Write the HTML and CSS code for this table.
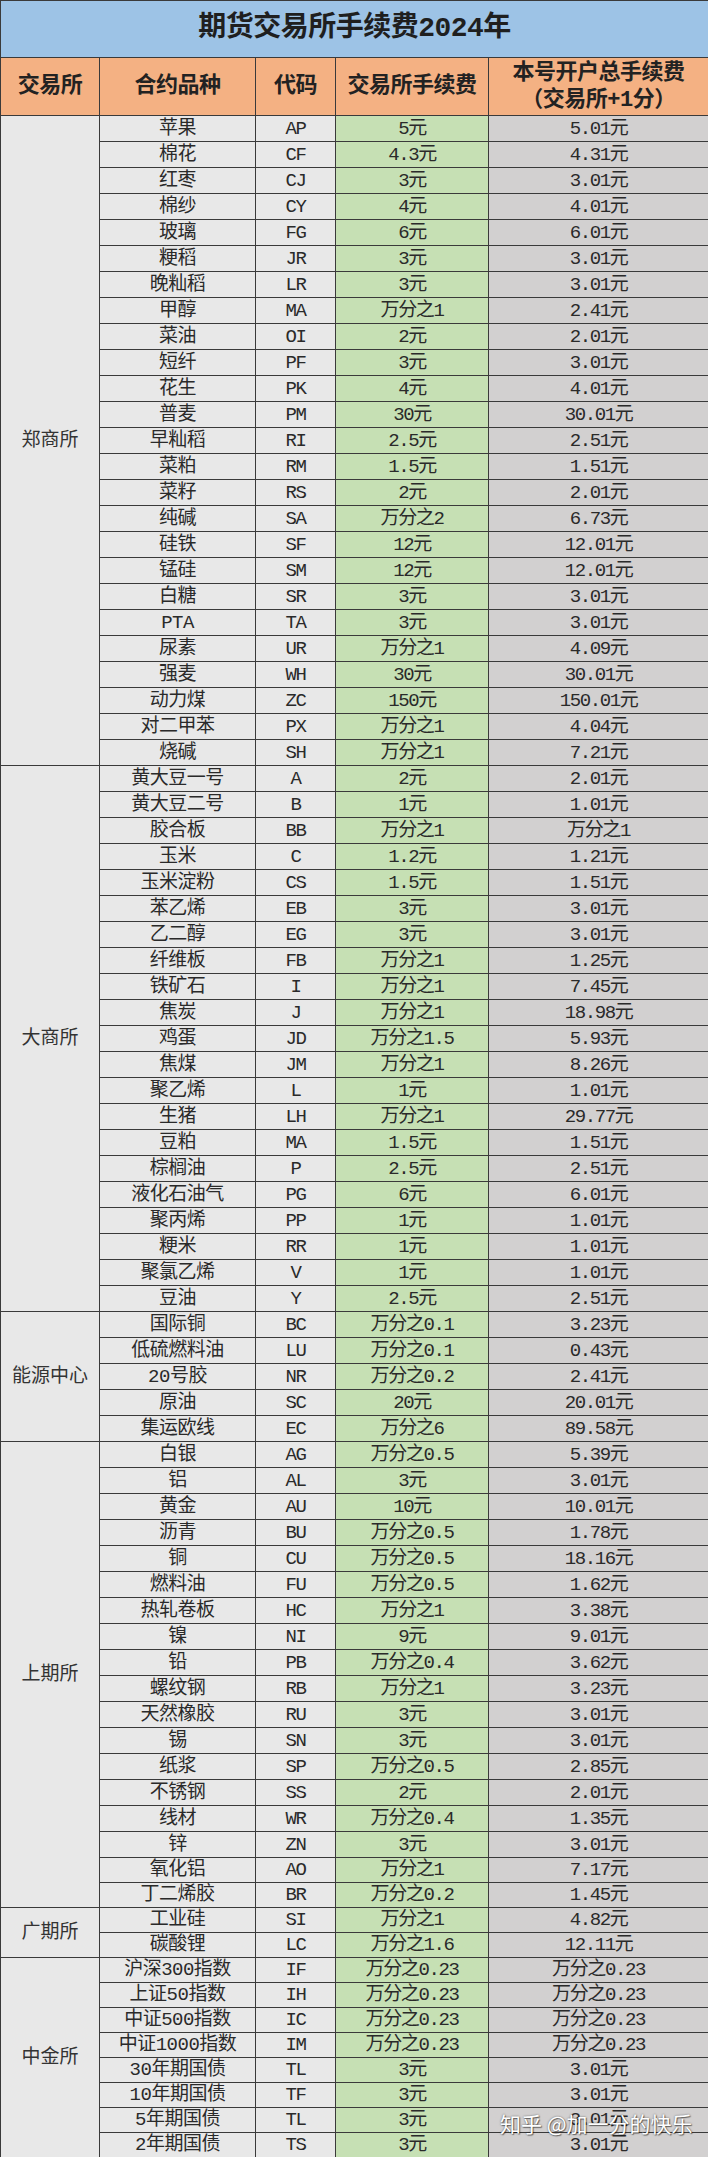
FILE: index.html
```html
<!DOCTYPE html>
<html lang="zh-CN">
<head>
<meta charset="utf-8">
<title>期货交易所手续费2024年</title>
<link rel="stylesheet" href="styles.css">
</head>
<body>
<div class="sheet">
<table class="fees">
  <colgroup>
    <col class="c-ex"><col class="c-name"><col class="c-code"><col class="c-fee"><col class="c-total">
  </colgroup>
  <thead>
    <tr class="title-row"><th colspan="5" class="title">期货交易所手续费2024年</th></tr>
    <tr class="head-row">
      <th>交易所</th><th>合约品种</th><th>代码</th><th>交易所手续费</th>
      <th class="two">本号开户总手续费<br>（交易所+1分）</th>
    </tr>
  </thead>
  <tbody>
    <tr><td class="ex" rowspan="25">郑商所</td><td class="nm">苹果</td><td class="cd">AP</td><td class="fe">5元</td><td class="tt">5.01元</td></tr>
    <tr><td class="nm">棉花</td><td class="cd">CF</td><td class="fe">4.3元</td><td class="tt">4.31元</td></tr>
    <tr><td class="nm">红枣</td><td class="cd">CJ</td><td class="fe">3元</td><td class="tt">3.01元</td></tr>
    <tr><td class="nm">棉纱</td><td class="cd">CY</td><td class="fe">4元</td><td class="tt">4.01元</td></tr>
    <tr><td class="nm">玻璃</td><td class="cd">FG</td><td class="fe">6元</td><td class="tt">6.01元</td></tr>
    <tr><td class="nm">粳稻</td><td class="cd">JR</td><td class="fe">3元</td><td class="tt">3.01元</td></tr>
    <tr><td class="nm">晚籼稻</td><td class="cd">LR</td><td class="fe">3元</td><td class="tt">3.01元</td></tr>
    <tr><td class="nm">甲醇</td><td class="cd">MA</td><td class="fe">万分之1</td><td class="tt">2.41元</td></tr>
    <tr><td class="nm">菜油</td><td class="cd">OI</td><td class="fe">2元</td><td class="tt">2.01元</td></tr>
    <tr><td class="nm">短纤</td><td class="cd">PF</td><td class="fe">3元</td><td class="tt">3.01元</td></tr>
    <tr><td class="nm">花生</td><td class="cd">PK</td><td class="fe">4元</td><td class="tt">4.01元</td></tr>
    <tr><td class="nm">普麦</td><td class="cd">PM</td><td class="fe">30元</td><td class="tt">30.01元</td></tr>
    <tr><td class="nm">早籼稻</td><td class="cd">RI</td><td class="fe">2.5元</td><td class="tt">2.51元</td></tr>
    <tr><td class="nm">菜粕</td><td class="cd">RM</td><td class="fe">1.5元</td><td class="tt">1.51元</td></tr>
    <tr><td class="nm">菜籽</td><td class="cd">RS</td><td class="fe">2元</td><td class="tt">2.01元</td></tr>
    <tr><td class="nm">纯碱</td><td class="cd">SA</td><td class="fe">万分之2</td><td class="tt">6.73元</td></tr>
    <tr><td class="nm">硅铁</td><td class="cd">SF</td><td class="fe">12元</td><td class="tt">12.01元</td></tr>
    <tr><td class="nm">锰硅</td><td class="cd">SM</td><td class="fe">12元</td><td class="tt">12.01元</td></tr>
    <tr><td class="nm">白糖</td><td class="cd">SR</td><td class="fe">3元</td><td class="tt">3.01元</td></tr>
    <tr><td class="nm">PTA</td><td class="cd">TA</td><td class="fe">3元</td><td class="tt">3.01元</td></tr>
    <tr><td class="nm">尿素</td><td class="cd">UR</td><td class="fe">万分之1</td><td class="tt">4.09元</td></tr>
    <tr><td class="nm">强麦</td><td class="cd">WH</td><td class="fe">30元</td><td class="tt">30.01元</td></tr>
    <tr><td class="nm">动力煤</td><td class="cd">ZC</td><td class="fe">150元</td><td class="tt">150.01元</td></tr>
    <tr><td class="nm">对二甲苯</td><td class="cd">PX</td><td class="fe">万分之1</td><td class="tt">4.04元</td></tr>
    <tr><td class="nm">烧碱</td><td class="cd">SH</td><td class="fe">万分之1</td><td class="tt">7.21元</td></tr>

    <tr><td class="ex" rowspan="21">大商所</td><td class="nm">黄大豆一号</td><td class="cd">A</td><td class="fe">2元</td><td class="tt">2.01元</td></tr>
    <tr><td class="nm">黄大豆二号</td><td class="cd">B</td><td class="fe">1元</td><td class="tt">1.01元</td></tr>
    <tr><td class="nm">胶合板</td><td class="cd">BB</td><td class="fe">万分之1</td><td class="tt">万分之1</td></tr>
    <tr><td class="nm">玉米</td><td class="cd">C</td><td class="fe">1.2元</td><td class="tt">1.21元</td></tr>
    <tr><td class="nm">玉米淀粉</td><td class="cd">CS</td><td class="fe">1.5元</td><td class="tt">1.51元</td></tr>
    <tr><td class="nm">苯乙烯</td><td class="cd">EB</td><td class="fe">3元</td><td class="tt">3.01元</td></tr>
    <tr><td class="nm">乙二醇</td><td class="cd">EG</td><td class="fe">3元</td><td class="tt">3.01元</td></tr>
    <tr><td class="nm">纤维板</td><td class="cd">FB</td><td class="fe">万分之1</td><td class="tt">1.25元</td></tr>
    <tr><td class="nm">铁矿石</td><td class="cd">I</td><td class="fe">万分之1</td><td class="tt">7.45元</td></tr>
    <tr><td class="nm">焦炭</td><td class="cd">J</td><td class="fe">万分之1</td><td class="tt">18.98元</td></tr>
    <tr><td class="nm">鸡蛋</td><td class="cd">JD</td><td class="fe">万分之1.5</td><td class="tt">5.93元</td></tr>
    <tr><td class="nm">焦煤</td><td class="cd">JM</td><td class="fe">万分之1</td><td class="tt">8.26元</td></tr>
    <tr><td class="nm">聚乙烯</td><td class="cd">L</td><td class="fe">1元</td><td class="tt">1.01元</td></tr>
    <tr><td class="nm">生猪</td><td class="cd">LH</td><td class="fe">万分之1</td><td class="tt">29.77元</td></tr>
    <tr><td class="nm">豆粕</td><td class="cd">MA</td><td class="fe">1.5元</td><td class="tt">1.51元</td></tr>
    <tr><td class="nm">棕榈油</td><td class="cd">P</td><td class="fe">2.5元</td><td class="tt">2.51元</td></tr>
    <tr><td class="nm">液化石油气</td><td class="cd">PG</td><td class="fe">6元</td><td class="tt">6.01元</td></tr>
    <tr><td class="nm">聚丙烯</td><td class="cd">PP</td><td class="fe">1元</td><td class="tt">1.01元</td></tr>
    <tr><td class="nm">粳米</td><td class="cd">RR</td><td class="fe">1元</td><td class="tt">1.01元</td></tr>
    <tr><td class="nm">聚氯乙烯</td><td class="cd">V</td><td class="fe">1元</td><td class="tt">1.01元</td></tr>
    <tr><td class="nm">豆油</td><td class="cd">Y</td><td class="fe">2.5元</td><td class="tt">2.51元</td></tr>

    <tr><td class="ex" rowspan="5">能源中心</td><td class="nm">国际铜</td><td class="cd">BC</td><td class="fe">万分之0.1</td><td class="tt">3.23元</td></tr>
    <tr><td class="nm">低硫燃料油</td><td class="cd">LU</td><td class="fe">万分之0.1</td><td class="tt">0.43元</td></tr>
    <tr><td class="nm">20号胶</td><td class="cd">NR</td><td class="fe">万分之0.2</td><td class="tt">2.41元</td></tr>
    <tr><td class="nm">原油</td><td class="cd">SC</td><td class="fe">20元</td><td class="tt">20.01元</td></tr>
    <tr><td class="nm">集运欧线</td><td class="cd">EC</td><td class="fe">万分之6</td><td class="tt">89.58元</td></tr>

    <tr><td class="ex" rowspan="18">上期所</td><td class="nm">白银</td><td class="cd">AG</td><td class="fe">万分之0.5</td><td class="tt">5.39元</td></tr>
    <tr><td class="nm">铝</td><td class="cd">AL</td><td class="fe">3元</td><td class="tt">3.01元</td></tr>
    <tr><td class="nm">黄金</td><td class="cd">AU</td><td class="fe">10元</td><td class="tt">10.01元</td></tr>
    <tr><td class="nm">沥青</td><td class="cd">BU</td><td class="fe">万分之0.5</td><td class="tt">1.78元</td></tr>
    <tr><td class="nm">铜</td><td class="cd">CU</td><td class="fe">万分之0.5</td><td class="tt">18.16元</td></tr>
    <tr><td class="nm">燃料油</td><td class="cd">FU</td><td class="fe">万分之0.5</td><td class="tt">1.62元</td></tr>
    <tr><td class="nm">热轧卷板</td><td class="cd">HC</td><td class="fe">万分之1</td><td class="tt">3.38元</td></tr>
    <tr><td class="nm">镍</td><td class="cd">NI</td><td class="fe">9元</td><td class="tt">9.01元</td></tr>
    <tr><td class="nm">铅</td><td class="cd">PB</td><td class="fe">万分之0.4</td><td class="tt">3.62元</td></tr>
    <tr><td class="nm">螺纹钢</td><td class="cd">RB</td><td class="fe">万分之1</td><td class="tt">3.23元</td></tr>
    <tr><td class="nm">天然橡胶</td><td class="cd">RU</td><td class="fe">3元</td><td class="tt">3.01元</td></tr>
    <tr><td class="nm">锡</td><td class="cd">SN</td><td class="fe">3元</td><td class="tt">3.01元</td></tr>
    <tr><td class="nm">纸浆</td><td class="cd">SP</td><td class="fe">万分之0.5</td><td class="tt">2.85元</td></tr>
    <tr><td class="nm">不锈钢</td><td class="cd">SS</td><td class="fe">2元</td><td class="tt">2.01元</td></tr>
    <tr><td class="nm">线材</td><td class="cd">WR</td><td class="fe">万分之0.4</td><td class="tt">1.35元</td></tr>
    <tr><td class="nm">锌</td><td class="cd">ZN</td><td class="fe">3元</td><td class="tt">3.01元</td></tr>
    <tr class="short"><td class="nm">氧化铝</td><td class="cd">AO</td><td class="fe">万分之1</td><td class="tt">7.17元</td></tr>
    <tr class="short"><td class="nm">丁二烯胶</td><td class="cd">BR</td><td class="fe">万分之0.2</td><td class="tt">1.45元</td></tr>

    <tr class="short"><td class="ex" rowspan="2">广期所</td><td class="nm">工业硅</td><td class="cd">SI</td><td class="fe">万分之1</td><td class="tt">4.82元</td></tr>
    <tr class="short"><td class="nm">碳酸锂</td><td class="cd">LC</td><td class="fe">万分之1.6</td><td class="tt">12.11元</td></tr>

    <tr class="short"><td class="ex" rowspan="8">中金所</td><td class="nm">沪深300指数</td><td class="cd">IF</td><td class="fe">万分之0.23</td><td class="tt">万分之0.23</td></tr>
    <tr class="short"><td class="nm">上证50指数</td><td class="cd">IH</td><td class="fe">万分之0.23</td><td class="tt">万分之0.23</td></tr>
    <tr class="short"><td class="nm">中证500指数</td><td class="cd">IC</td><td class="fe">万分之0.23</td><td class="tt">万分之0.23</td></tr>
    <tr class="short"><td class="nm">中证1000指数</td><td class="cd">IM</td><td class="fe">万分之0.23</td><td class="tt">万分之0.23</td></tr>
    <tr class="short"><td class="nm">30年期国债</td><td class="cd">TL</td><td class="fe">3元</td><td class="tt">3.01元</td></tr>
    <tr class="short"><td class="nm">10年期国债</td><td class="cd">TF</td><td class="fe">3元</td><td class="tt">3.01元</td></tr>
    <tr class="short"><td class="nm">5年期国债</td><td class="cd">TL</td><td class="fe">3元</td><td class="tt">3.01元</td></tr>
    <tr class="short"><td class="nm">2年期国债</td><td class="cd">TS</td><td class="fe">3元</td><td class="tt">3.01元</td></tr>
  </tbody>
</table>
<div class="watermark">知乎 @加一分的快乐</div>
</div>
</body>
</html>
```

FILE: styles.css
```css
html, body {
  margin: 0;
  padding: 0;
  background: #ffffff;
}

.sheet {
  position: relative;
  width: 708px;
}

.fees {
  width: 708px;
  table-layout: fixed;
  border-collapse: collapse;
  font-family: "Liberation Mono", "Noto Sans CJK SC", monospace;
  color: #2a2a2a;
  font-size: 19px;
  line-height: 22px;
}

.c-ex { width: 99px; }
.c-name { width: 156px; }
.c-code { width: 80px; }
.c-fee { width: 153px; }
.c-total { width: 220px; }

.fees th,
.fees td {
  border: 1px solid #3a3a3a;
  padding: 0;
  text-align: center;
  vertical-align: middle;
  overflow: hidden;
  white-space: nowrap;
}

.title-row { height: 57px; }
.title {
  background: #9dc3e6;
  font-size: 28px;
  line-height: 32px;
  font-weight: 700;
  color: #1f1f1f;
  letter-spacing: -0.5px;
}

.head-row { height: 58px; }
.head-row th {
  background: #f4b183;
  font-size: 22px;
  line-height: 27px;
  font-weight: 700;
  color: #222222;
  letter-spacing: -0.5px;
}

.fees tbody tr { height: 26px; }
.fees tbody tr.short { height: 25px; }

.ex {
  background: #e8e8e8;
  color: #333333;
}
.nm {
  background: #e8e8e8;
  letter-spacing: -0.5px;
}
.cd {
  background: #e8e8e8;
  letter-spacing: -1.4px;
}
.fe {
  background: #c6e0b4;
  letter-spacing: -1.4px;
}
.tt {
  background: #d2d0d0;
  letter-spacing: -1.4px;
}

.watermark {
  position: absolute;
  left: 500px;
  top: 2109px;
  font-family: "Noto Sans CJK SC", sans-serif;
  font-size: 21px;
  line-height: 28px;
  color: #ffffff;
  text-shadow: 0 0 2px rgba(0, 0, 0, 0.55), 1px 1px 1px rgba(0, 0, 0, 0.45);
  white-space: nowrap;
}
```
